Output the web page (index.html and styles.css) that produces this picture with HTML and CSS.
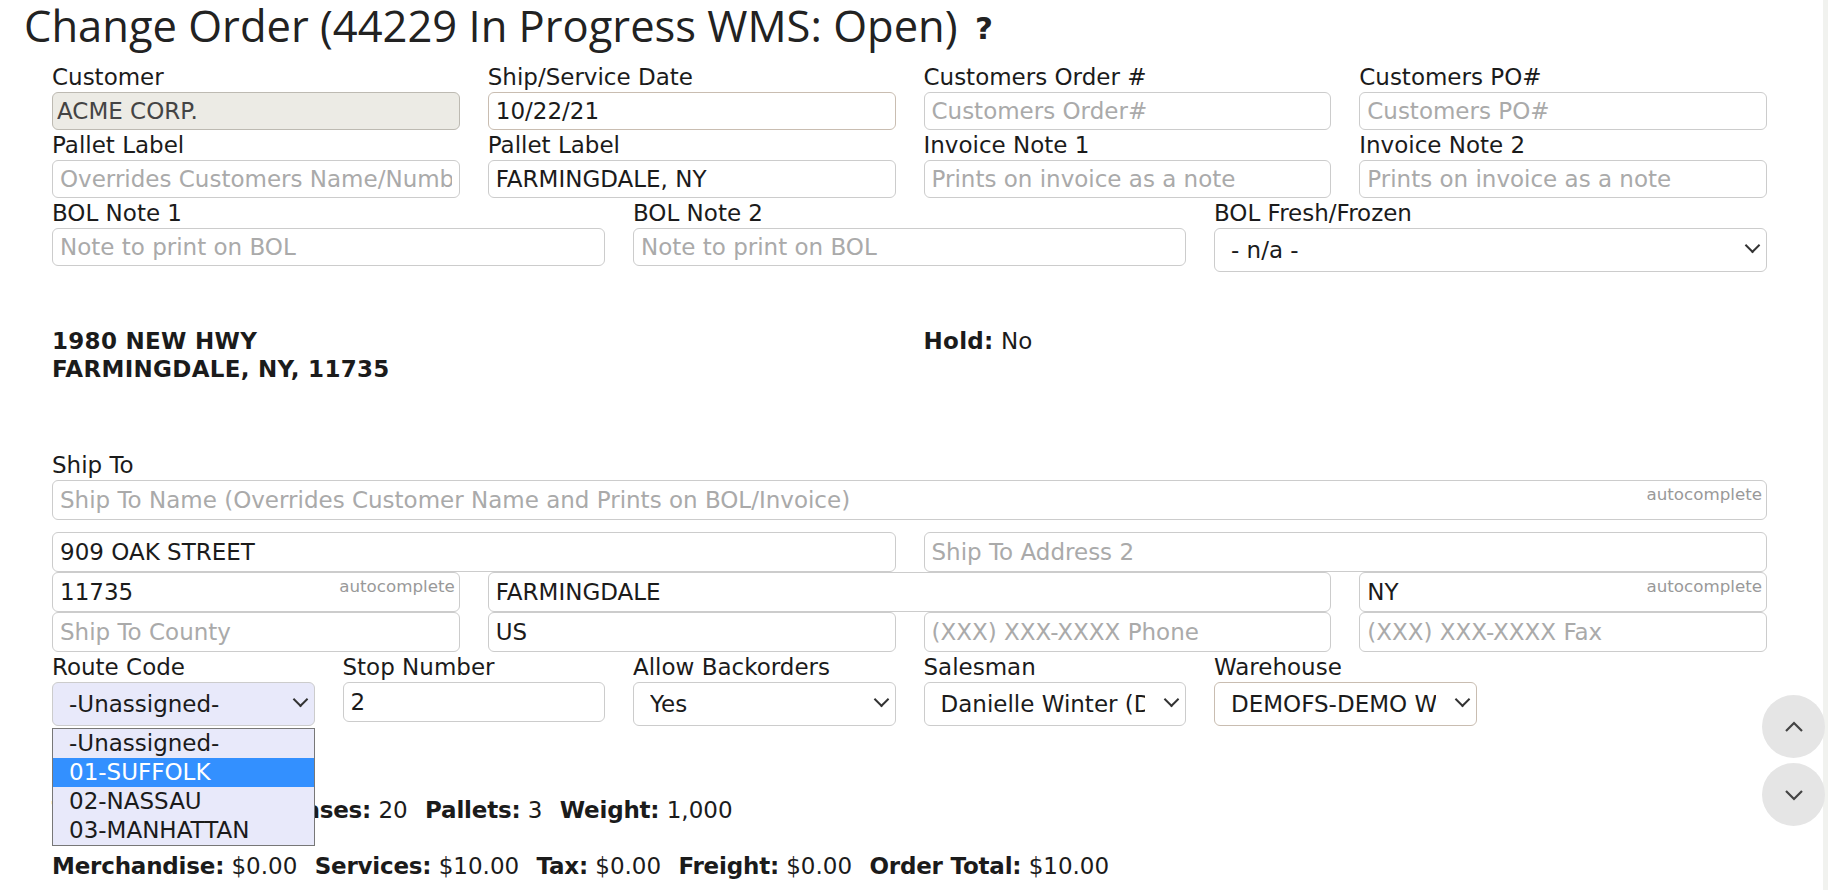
FILE: index.html
```html
<!DOCTYPE html>
<html lang="en">
<head>
    <meta charset="UTF-8">
    <meta name="viewport" content="width=device-width, initial-scale=1.0">
    <title>Change Order</title>
    <link rel="stylesheet" href="styles.css">
</head>
<body>
    <h1 class="page-title">Change Order (44229 In Progress WMS: Open) <span class="help">?</span></h1>

    <form class="order-form">
        <div class="grid">
            <div class="field span-3">
                <label for="customer">Customer</label>
                <input type="text" id="customer" class="locked" value="ACME CORP." disabled>
            </div>
            <div class="field span-3">
                <label for="ship-date">Ship/Service Date</label>
                <input type="text" id="ship-date" class="warm" value="10/22/21">
            </div>
            <div class="field span-3">
                <label for="cust-order">Customers Order #</label>
                <input type="text" id="cust-order" placeholder="Customers Order#">
            </div>
            <div class="field span-3">
                <label for="cust-po">Customers PO#</label>
                <input type="text" id="cust-po" placeholder="Customers PO#">
            </div>

            <div class="field span-3">
                <label for="pallet-1">Pallet Label</label>
                <input type="text" id="pallet-1" placeholder="Overrides Customers Name/Number">
            </div>
            <div class="field span-3">
                <label for="pallet-2">Pallet Label</label>
                <input type="text" id="pallet-2" value="FARMINGDALE, NY">
            </div>
            <div class="field span-3">
                <label for="inv-1">Invoice Note 1</label>
                <input type="text" id="inv-1" placeholder="Prints on invoice as a note">
            </div>
            <div class="field span-3">
                <label for="inv-2">Invoice Note 2</label>
                <input type="text" id="inv-2" placeholder="Prints on invoice as a note">
            </div>

            <div class="field span-4">
                <label for="bol-1">BOL Note 1</label>
                <input type="text" id="bol-1" placeholder="Note to print on BOL">
            </div>
            <div class="field span-4">
                <label for="bol-2">BOL Note 2</label>
                <input type="text" id="bol-2" placeholder="Note to print on BOL">
            </div>
            <div class="field span-4">
                <label for="bol-temp">BOL Fresh/Frozen</label>
                <div class="select-wrap">
                    <select id="bol-temp">
                        <option>- n/a -</option>
                        <option>Fresh</option>
                        <option>Frozen</option>
                    </select>
                </div>
            </div>
        </div>

        <div class="grid address">
            <div class="span-6">
                <b>1980 NEW HWY</b><br>
                <b>FARMINGDALE, NY, 11735</b>
            </div>
            <div class="span-6">
                <b>Hold:</b> No
            </div>
        </div>

        <div class="grid ship-to">
            <div class="field span-12">
                <label for="ship-name">Ship To</label>
                <div class="input-wrap">
                    <input type="text" id="ship-name" placeholder="Ship To Name (Overrides Customer Name and Prints on BOL/Invoice)">
                    <span class="hint">autocomplete</span>
                </div>
            </div>
        </div>

        <div class="grid ship-lines">
            <div class="field span-6">
                <input type="text" value="909 OAK STREET">
            </div>
            <div class="field span-6">
                <input type="text" placeholder="Ship To Address 2">
            </div>

            <div class="field span-3">
                <div class="input-wrap">
                    <input type="text" value="11735">
                    <span class="hint">autocomplete</span>
                </div>
            </div>
            <div class="field span-6">
                <input type="text" value="FARMINGDALE">
            </div>
            <div class="field span-3">
                <div class="input-wrap">
                    <input type="text" value="NY">
                    <span class="hint">autocomplete</span>
                </div>
            </div>

            <div class="field span-3">
                <input type="text" placeholder="Ship To County">
            </div>
            <div class="field span-3">
                <input type="text" value="US">
            </div>
            <div class="field span-3">
                <input type="text" placeholder="(XXX) XXX-XXXX Phone">
            </div>
            <div class="field span-3">
                <input type="text" placeholder="(XXX) XXX-XXXX Fax">
            </div>
        </div>

        <div class="grid">
            <div class="field span-2">
                <label for="route">Route Code</label>
                <div class="select-wrap">
                    <select id="route" class="active">
                        <option>-Unassigned-</option>
                        <option>01-SUFFOLK</option>
                        <option>02-NASSAU</option>
                        <option>03-MANHATTAN</option>
                    </select>
                </div>
                <ul class="route-menu">
                    <li>-Unassigned-</li>
                    <li class="selected">01-SUFFOLK</li>
                    <li>02-NASSAU</li>
                    <li>03-MANHATTAN</li>
                </ul>
            </div>
            <div class="field span-2">
                <label for="stop">Stop Number</label>
                <input type="text" id="stop" class="stop" value="2">
            </div>
            <div class="field span-2">
                <label for="backorders">Allow Backorders</label>
                <div class="select-wrap">
                    <select id="backorders">
                        <option>Yes</option>
                        <option>No</option>
                    </select>
                </div>
            </div>
            <div class="field span-2">
                <label for="salesman">Salesman</label>
                <div class="select-wrap">
                    <select id="salesman">
                        <option>Danielle Winter (DW)</option>
                    </select>
                </div>
            </div>
            <div class="field span-2">
                <label for="warehouse">Warehouse</label>
                <div class="select-wrap">
                    <select id="warehouse" class="warm">
                        <option>DEMOFS-DEMO WAREHOUSE</option>
                    </select>
                </div>
            </div>
        </div>

        <div class="totals">
            <span class="stat"><b>Total Units:</b> 1,200</span>
            <span class="stat"><b>Cases:</b> 20</span>
            <span class="stat"><b>Pallets:</b> 3</span>
            <span class="stat"><b>Weight:</b> 1,000</span>
        </div>

        <div class="totals money">
            <span class="stat"><b>Merchandise:</b> $0.00</span>
            <span class="stat"><b>Services:</b> $10.00</span>
            <span class="stat"><b>Tax:</b> $0.00</span>
            <span class="stat"><b>Freight:</b> $0.00</span>
            <span class="stat"><b>Order Total:</b> $10.00</span>
        </div>
    </form>

    <div class="scroll-nav">
        <button type="button" class="scroll-btn" aria-label="Scroll up">
            <svg width="22" height="14" viewBox="0 0 22 14"><path d="M3 11 L11 3 L19 11" fill="none" stroke="#444" stroke-width="2.2"/></svg>
        </button>
        <button type="button" class="scroll-btn" aria-label="Scroll down">
            <svg width="22" height="14" viewBox="0 0 22 14"><path d="M3 3 L11 11 L19 3" fill="none" stroke="#444" stroke-width="2.2"/></svg>
        </button>
    </div>
</body>
</html>
```

FILE: styles.css
```css
html {
    background: linear-gradient(to left, #f1f2ef 5px, #fff 5px);
    min-height: 100%;
}

body {
    margin: 0;
    font-family: Verdana, "DejaVu Sans", sans-serif;
    font-size: 23px;
    color: #1b1b1b;
}

b {
    letter-spacing: 0.3px;
}

.page-title {
    margin: 0;
    padding: 0 0 8px 24px;
    font-family: "Segoe UI", "Open Sans", sans-serif;
    font-weight: 400;
    font-size: 43.5px;
    line-height: 52px;
    color: #222;
    white-space: nowrap;
}

.help {
    font-family: Verdana, "DejaVu Sans", sans-serif;
    font-weight: bold;
    font-size: 31px;
    margin-left: 6px;
    vertical-align: 3px;
}

.order-form {
    padding: 0 61px 0 52px;
}

.grid {
    display: grid;
    grid-template-columns: repeat(12, 1fr);
    column-gap: 28px;
}

.span-2 { grid-column: span 2; }
.span-3 { grid-column: span 3; }
.span-4 { grid-column: span 4; }
.span-6 { grid-column: span 6; }
.span-12 { grid-column: span 12; }

.field {
    position: relative;
    min-width: 0;
}

.field label {
    display: block;
    height: 30px;
    line-height: 30px;
    white-space: nowrap;
}

.field input,
.field select {
    display: block;
    width: 100%;
    box-sizing: border-box;
    font: inherit;
    color: inherit;
    border: 1px solid #ccc;
    border-radius: 6px;
    background: #fff;
    margin: 0;
}

.field input {
    height: 38px;
    padding: 0 7px;
}

.field select {
    -webkit-appearance: none;
    appearance: none;
    height: 44px;
    padding: 0 40px 0 16px;
    white-space: nowrap;
    overflow: hidden;
}

.select-wrap {
    position: relative;
}

.select-wrap::after {
    content: "";
    position: absolute;
    top: calc(50% - 10px);
    right: 9px;
    width: 11px;
    height: 11px;
    box-sizing: border-box;
    border-right: 2px solid #333;
    border-bottom: 2px solid #333;
    transform: rotate(45deg);
    pointer-events: none;
}

.field input::placeholder {
    color: #aaa;
}

.field input.locked {
    background: #ecebe5;
    border-color: #bdbab2;
    color: #444;
    padding: 0 4px;
}

.field .warm {
    border-color: #c9bdb1;
}

.field input.stop {
    height: 40px;
}

.field select.active {
    background: #e8e9fa;
}

.address {
    margin-top: 55px;
    line-height: 28px;
}

.ship-to {
    margin-top: 67px;
}

.ship-to input,
.ship-lines input {
    height: 40px;
}

.ship-lines {
    margin-top: 12px;
}

.input-wrap {
    position: relative;
}

.hint {
    position: absolute;
    top: 5px;
    right: 5px;
    font-size: 16.7px;
    line-height: 19px;
    color: #999;
}

.route-menu {
    position: absolute;
    top: calc(100% + 2px);
    left: 0;
    right: 0;
    margin: 0;
    padding: 0;
    list-style: none;
    background: #e8e9fa;
    border: 1px solid #777;
    z-index: 10;
}

.route-menu li {
    height: 29px;
    line-height: 29px;
    padding-left: 16px;
    white-space: nowrap;
}

.route-menu li.selected {
    background: #3390ff;
    color: #fff;
}

.totals {
    margin-top: 70px;
    line-height: 28px;
    white-space: nowrap;
}

.totals.money {
    margin-top: 28px;
}

.totals b {
    letter-spacing: -0.2px;
}

.stat {
    margin-right: 10px;
}

.scroll-nav {
    position: fixed;
    top: 695px;
    right: 3px;
    display: flex;
    flex-direction: column;
    gap: 5px;
}

.scroll-btn {
    width: 63px;
    height: 63px;
    border: none;
    border-radius: 50%;
    background: #e5e5e5;
    padding: 0;
    display: flex;
    align-items: center;
    justify-content: center;
}
```
